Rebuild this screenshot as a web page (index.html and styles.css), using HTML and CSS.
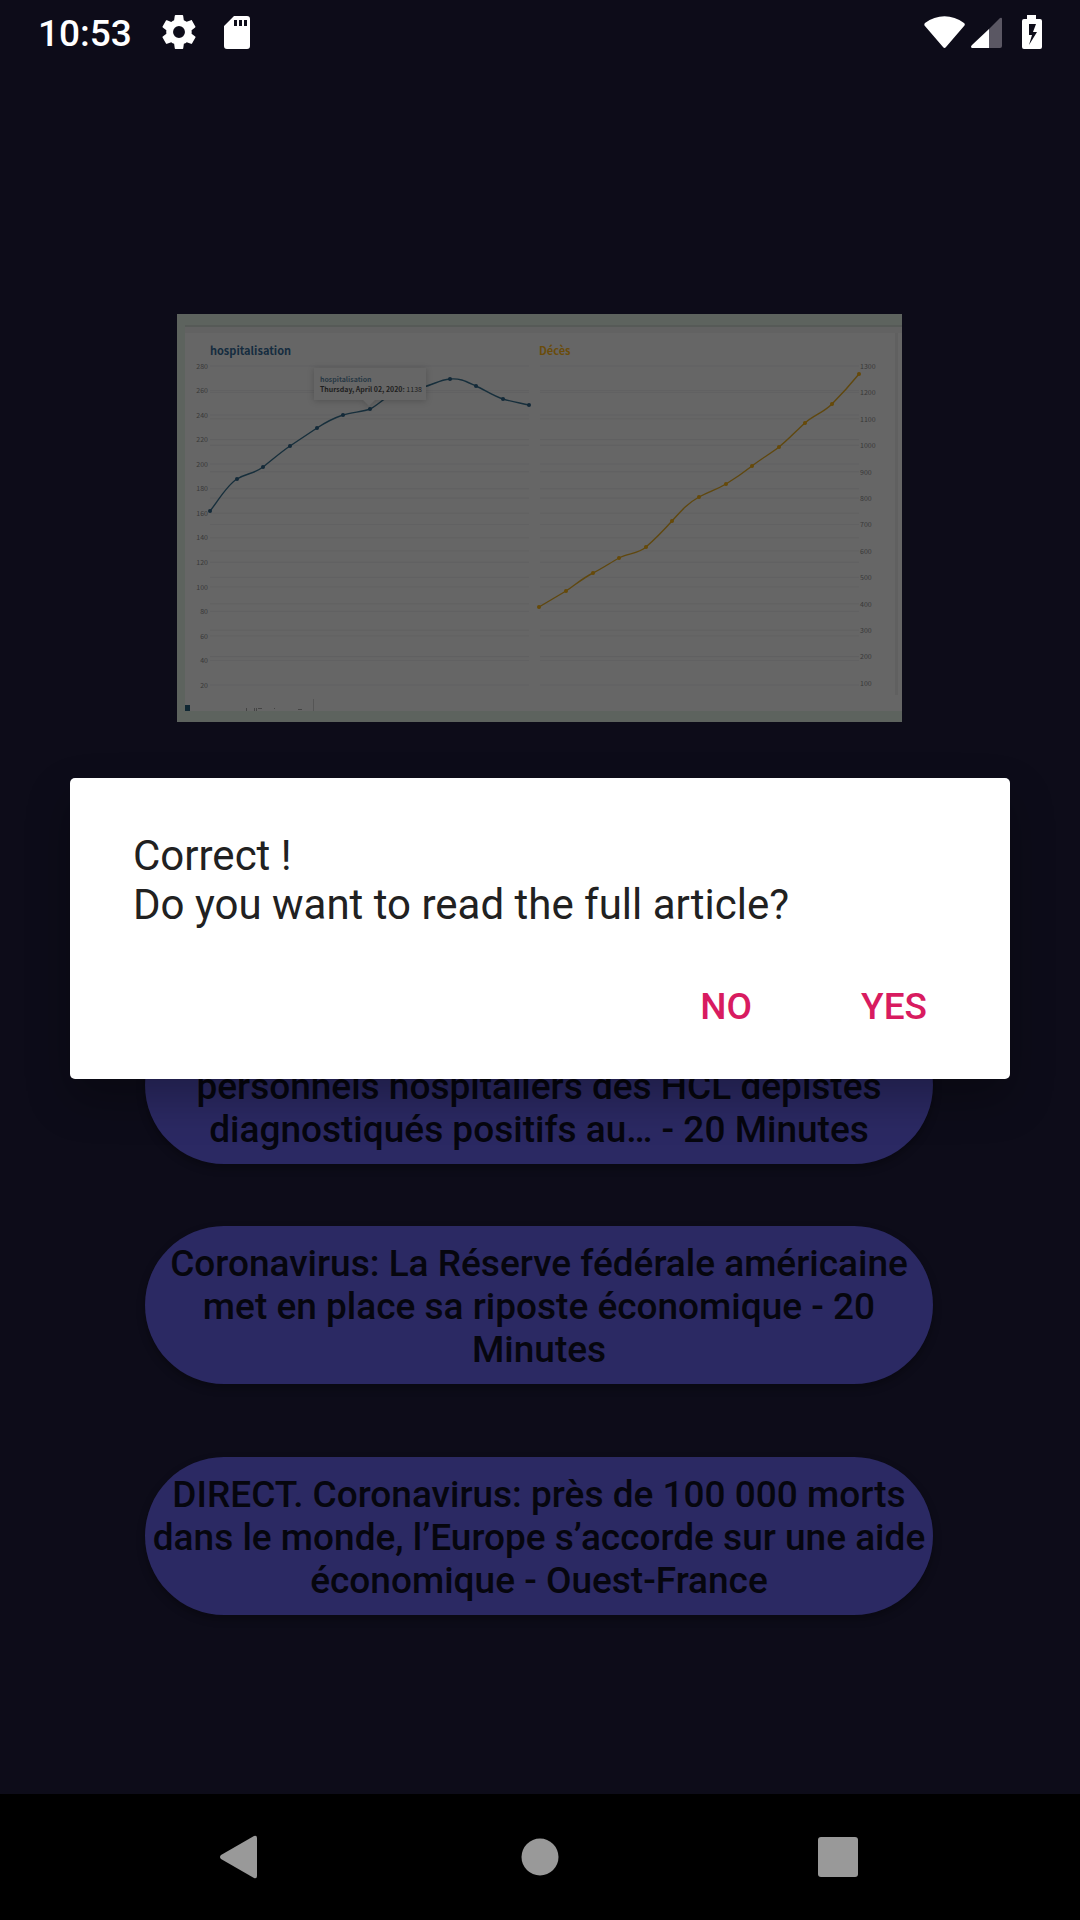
FILE: index.html
```html
<!DOCTYPE html>
<html lang="en">
<head>
<meta charset="utf-8">
<meta name="viewport" content="width=device-width, initial-scale=1">
<title>News quiz</title>
<link rel="stylesheet" href="styles.css">
</head>
<body>
<header class="status">
  <div class="status-left">
    <time class="clock">10:53</time>
    <svg class="gear" viewBox="2 2 20 20" width="34" height="34" aria-hidden="true"><path fill="#fff" d="M19.4 13c.04-.3.06-.65.06-1s-.02-.7-.06-1l2.1-1.65c.2-.15.25-.42.12-.64l-2-3.46c-.12-.22-.39-.3-.61-.22l-2.49 1c-.52-.4-1.08-.73-1.69-.98l-.38-2.65A.49.49 0 0 0 14 2h-4c-.25 0-.46.18-.49.42l-.38 2.65c-.61.25-1.17.59-1.69.98l-2.49-1c-.23-.09-.49 0-.61.22l-2 3.46c-.13.22-.07.49.12.64L4.57 11c-.04.3-.07.66-.07 1s.03.7.07 1l-2.11 1.65c-.19.15-.24.42-.12.64l2 3.46c.12.22.39.3.61.22l2.49-1c.52.4 1.08.73 1.69.98l.38 2.65c.03.24.24.42.49.42h4c.25 0 .46-.18.49-.42l.38-2.65c.61-.25 1.17-.59 1.69-.98l2.49 1c.23.09.49 0 .61-.22l2-3.46c.12-.22.07-.49-.12-.64L19.4 13zM12 15.5a3.5 3.5 0 1 1 0-7 3.5 3.5 0 0 1 0 7z"/></svg>
    <svg viewBox="0 0 26 33" width="26" height="33" aria-hidden="true"><path fill="#fff" fill-rule="evenodd" d="M10 0h13a3 3 0 0 1 3 3v27a3 3 0 0 1-3 3H3a3 3 0 0 1-3-3V10zM10 4v6h3V4zM15 4v6h3V4zM20 4v6h3V4z"/></svg>
  </div>
  <div class="status-right">
    <svg viewBox="0 0 41 33" width="41" height="33" aria-hidden="true"><path fill="#fff" d="M1 7C13-2 28-2 40 7c1 1 1 1 .5 2.500L22 31q-1.500 2-3 0L.5 9.500Q0 8 1 7z"/></svg>
    <svg class="signal" viewBox="0 0 31 31" width="31" height="31" aria-hidden="true"><path fill="#5a5763" d="M18 12 29 1q2-1 2 1v27q0 2-2 2H18z"/><path fill="#fff" d="M18 12v19H1q-2-1 0-3z"/></svg>
    <svg viewBox="0 0 20 34" width="20" height="34" aria-hidden="true"><path fill="#fff" fill-rule="evenodd" d="M5 0h9v4h4a2 2 0 0 1 2 2v26a2 2 0 0 1-2 2H2a2 2 0 0 1-2-2V6a2 2 0 0 1 2-2h3zM7 9v11h3L7 30l8-13h-4l3-8z"/></svg>
  </div>
</header>

<main class="quiz">
  <svg class="chart" viewBox="0 0 725 408" role="img" aria-label="hospitalisation, Décès">
    <defs>
      <g id="rows"><path d="M0 52h319M0 76.500h319M0 101h319M0 125.600h319M0 150h319M0 174.700h319M0 199.200h319M0 223.800h319M0 248.300h319M0 272.900h319M0 297.400h319M0 321.900h319M0 346.500h319M0 371h319M0 78.400h319M0 104.800h319M0 131.300h319M0 157.700h319M0 184.100h319M0 210.500h319M0 236.900h319M0 263.400h319M0 289.800h319M0 316.200h319M0 342.600h319"/></g>
    </defs>
    <rect width="725" height="408" fill="#5d635e"/>
    <rect x="8" y="12" width="717" height="385" fill="#666"/>
    <rect x="8" y="13" width="717" height="6" fill="#626262"/>
    <rect x="8" y="11" width="717" height="2" fill="#565a57"/>
    <rect x="718" y="19" width="3" height="362" fill="#606060"/>
    <g stroke="#616162"><use href="#rows" x="33"/><use href="#rows" x="363"/></g>
    <text class="title" x="33" y="41" fill="#152c3f">hospitalisation</text>
    <text class="title" x="362" y="41" fill="#6a4c0b">Décès</text>
    <g class="axis" text-anchor="end">
      <text x="31" y="55">280</text><text x="31" y="79">260</text><text x="31" y="104">240</text><text x="31" y="128">220</text><text x="31" y="153">200</text><text x="31" y="177">180</text><text x="31" y="202">160</text><text x="31" y="226">140</text><text x="31" y="251">120</text><text x="31" y="276">100</text><text x="31" y="300">80</text><text x="31" y="325">60</text><text x="31" y="349">40</text><text x="31" y="374">20</text>
    </g>
    <g class="axis">
      <text x="683" y="55">1300</text><text x="683" y="81">1200</text><text x="683" y="108">1100</text><text x="683" y="134">1000</text><text x="683" y="161">900</text><text x="683" y="187">800</text><text x="683" y="213">700</text><text x="683" y="240">600</text><text x="683" y="266">500</text><text x="683" y="293">400</text><text x="683" y="319">300</text><text x="683" y="345">200</text><text x="683" y="372">100</text>
    </g>
    <path class="line" stroke="#172f3c" d="M33 197C41 187 50 171 60 165S77 160 86 153S104 138 113 132S131 120 140 114S157 104 166 101S186 98 193 95S209 82 219 78S236 75 246 73S262 66 273 65S290 68 299 72S316 82 326 85S344 89 352 91"/>
    <g fill="#142a39"><circle cx="33" cy="197" r="2"/><circle cx="60" cy="165" r="2"/><circle cx="86" cy="153" r="2"/><circle cx="113" cy="132" r="2"/><circle cx="140" cy="114" r="2"/><circle cx="166" cy="101" r="2"/><circle cx="193" cy="95" r="2"/><circle cx="273" cy="65" r="2"/><circle cx="299" cy="72" r="2"/><circle cx="326" cy="85" r="2"/><circle cx="352" cy="91" r="2"/></g>
    <path class="line" stroke="#60480f" d="M362 293L389 277C398 271 406 264 416 259S433 249 442 244S461 240 469 233S486 217 495 207S511 189 522 183S539 176 549 170S566 159 575 152S593 140 602 133S619 117 628 109S646 99 655 90S673 71 682 60"/>
    <g fill="#674a08"><circle cx="362" cy="293" r="2"/><circle cx="389" cy="277" r="2"/><circle cx="416" cy="259" r="2"/><circle cx="442" cy="244" r="2"/><circle cx="469" cy="233" r="2"/><circle cx="495" cy="207" r="2"/><circle cx="522" cy="183" r="2"/><circle cx="549" cy="170" r="2"/><circle cx="575" cy="152" r="2"/><circle cx="602" cy="133" r="2"/><circle cx="628" cy="109" r="2"/><circle cx="655" cy="90" r="2"/><circle cx="682" cy="60" r="2"/></g>
    <path class="tip" d="M137 54h112v32h-51l-6 6-6-6h-49z"/>
    <text class="tip-text" x="143" y="68" fill="#283844">hospitalisation</text>
    <text class="tip-text" x="143" y="78" fill="#1e1e1e">Thursday, April 02, 2020: <tspan class="tip-value">1138</tspan></text>
    <path fill="#102733" d="M8 391h5v6H8z"/>
    <path stroke="#555" d="M136.500 385v12"/>
    <path stroke="#444" d="M69.500 394v3M77.500 394v3M79.500 394v3M81 394.500h4M97.500 394v1M121 395.500h4"/>
  </svg>

  <div class="answers">
    <button class="answer answer-last-lines" type="button">personnels hospitaliers des HCL dépistés diagnostiqués positifs au… - 20 Minutes</button>
    <button class="answer" type="button">Coronavirus: La Réserve fédérale américaine met en place sa riposte économique - 20 Minutes</button>
    <button class="answer answer-final" type="button">DIRECT. Coronavirus: près de 100 000 morts dans le monde, l’Europe s’accorde sur une aide économique - Ouest-France</button>
  </div>
</main>

<nav class="navbar" aria-label="System">
  <button type="button" aria-label="Back"><svg viewBox="3 0 42 42" width="42" height="42" overflow="visible"><path fill="#999" d="M36 0q3-1 3 2v38q0 3-3 2L3 23q-2-2 0-4z"/></svg></button>
  <button type="button" aria-label="Home"><svg viewBox="0 0 42 42" width="42" height="42"><circle cx="21" cy="21" r="18.500" fill="#999"/></svg></button>
  <button type="button" aria-label="Recent apps"><svg viewBox="0 0 42 42" width="42" height="42"><rect x="1" y="1" width="40" height="40" rx="3" fill="#999"/></svg></button>
</nav>

<div class="overlay">
  <section class="dialog" role="dialog" aria-labelledby="message">
    <p class="message" id="message">Correct !<br>Do you want to read the full article?</p>
    <div class="actions">
      <button type="button">NO</button>
      <button type="button">YES</button>
    </div>
  </section>
</div>
</body>
</html>
```
FILE: styles.css
```css
* { box-sizing: border-box; }

body {
  position: relative;
  display: flex;
  flex-direction: column;
  min-height: 100vh;
  margin: 0;
  background: #0d0c19;
  font-family: Roboto, "Liberation Sans", sans-serif;
}

button {
  padding: 0;
  border: 0;
  background: none;
  font: inherit;
  cursor: pointer;
}

svg { display: block; }

.status {
  display: flex;
  align-items: center;
  justify-content: space-between;
  height: 64px;
  padding: 0 38px;
  color: #fff;
}

.status-left,
.status-right {
  display: flex;
  align-items: center;
}

.status-left { gap: 28px; }
.clock { padding-top: 2px; font-size: 37px; font-weight: 500; line-height: 43px; }
.gear { margin-left: 2px; }
.signal { margin: 0 20px 0 6px; }

.quiz {
  flex: 1;
  display: flex;
  flex-direction: column;
  align-items: center;
  gap: 284px;
  padding: 250px 2px 178px 0;
}

.chart { width: 725px; max-width: 90%; }

.title { font: 700 11px "Noto Sans CJK JP", sans-serif; }
.axis { font: 400 7px "Noto Sans CJK JP", sans-serif; fill: #383838; }
.line { fill: none; stroke-width: 1.4; }
.tip { fill: #666; filter: drop-shadow(0 1px 3px rgba(0, 0, 0, 0.2)); }
.tip-text { font: 700 7px "Noto Sans CJK JP", sans-serif; }
.tip-value { font-weight: 400; }

.answers {
  display: flex;
  flex-direction: column;
  gap: 62px;
  width: 73%;
  min-width: 788px;
}

.answer {
  display: flex;
  align-items: center;
  justify-content: center;
  min-height: 158px;
  padding: 15px 4px 13px;
  border-radius: 79px;
  background: #2b2963;
  box-shadow: 0 4px 8px rgba(0, 0, 0, 0.3);
  color: #06060e;
  font-size: 37px;
  font-weight: 500;
  line-height: 43px;
  text-align: center;
}

.answer-last-lines { align-items: flex-end; padding: 15px 24px 13px; }
.answer-final { margin-top: 11px; }

.navbar {
  display: flex;
  align-items: center;
  justify-content: center;
  gap: 178px;
  height: 126px;
  background: #000;
}

.navbar button {
  display: flex;
  align-items: center;
  justify-content: center;
  width: 120px;
  height: 100%;
}

.overlay {
  position: absolute;
  inset: 64px 0 128px;
  display: flex;
  align-items: center;
  padding: 0 70px;
}

.dialog {
  flex: 1;
  padding: 53px 43px 51px 63px;
  border-radius: 5px;
  background: #fff;
  box-shadow: 0 20px 44px rgba(0, 0, 0, 0.28);
}

.message {
  margin: 0;
  color: #212121;
  font-size: 42px;
  line-height: 49px;
}

.actions {
  display: flex;
  justify-content: flex-end;
  gap: 29px;
  margin-top: 56px;
}

.actions button {
  padding: 0 40px;
  color: #d81b60;
  font-size: 37px;
  font-weight: 500;
  line-height: 43px;
}
```
